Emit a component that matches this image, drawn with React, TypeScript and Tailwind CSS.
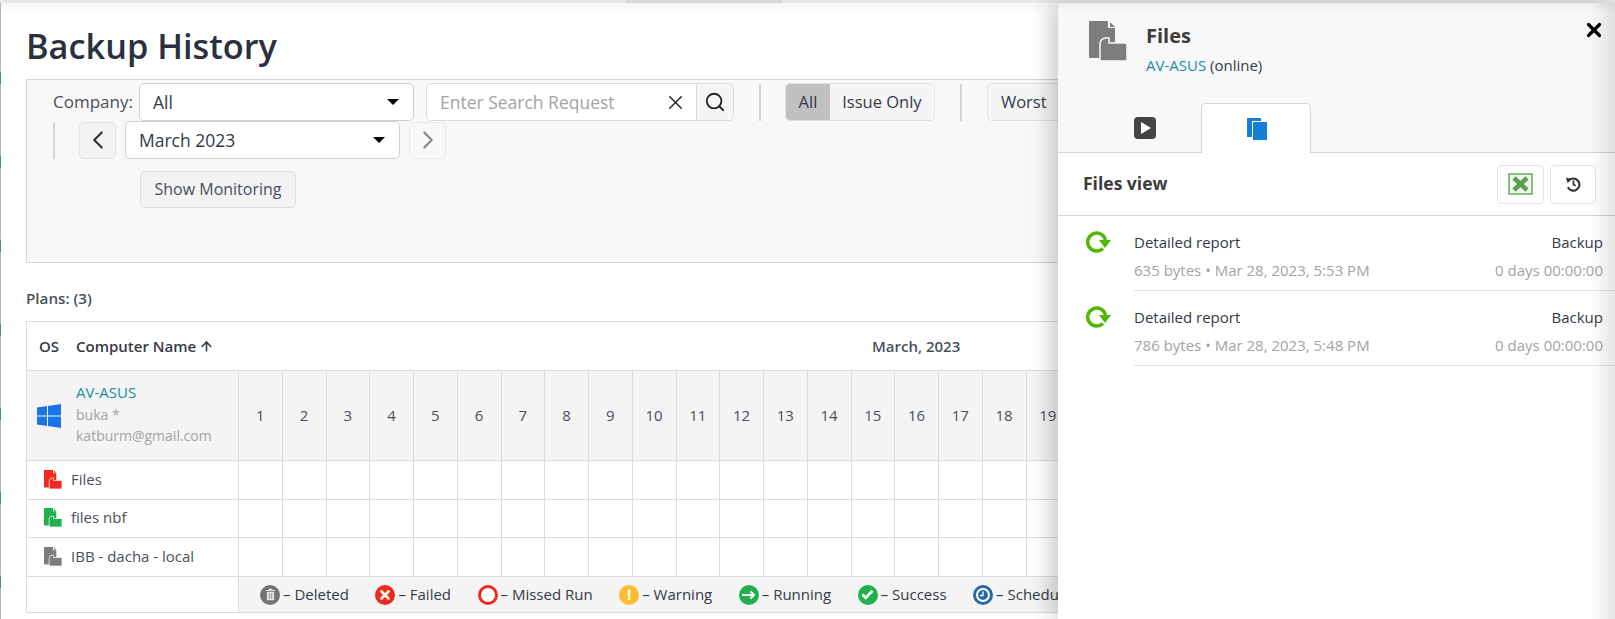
import { ArrowUp, ChevronLeft, ChevronRight, Search, X } from "lucide-react";
import React from "react";

const days = Array.from({ length: 31 }, (_, i) => i + 1);

const FilesIcon = ({ className, outline = "white" }: { className: string; outline?: string }) => (
  <svg viewBox="0 0 38 40" className={className} fill="currentColor">
    <path d="M1 0h18v7h7v30H1a1 1 0 0 1-1-1V1a1 1 0 0 1 1-1z" />
    <path d="M21 1l5 5h-5z" />
    <path
      d="M11 24c0-4 2-7 6-7h3v5h16a2 2 0 0 1 2 2v15a1 1 0 0 1-1 1H13a2 2 0 0 1-2-2z"
      stroke={outline}
      strokeWidth="1.5"
    />
  </svg>
);

const Caret = () => (
  <span className="w-0 h-0 border-x-[6px] border-x-transparent border-t-[6px] border-t-black" />
);

const Separator = ({ className = "" }: { className?: string }) => (
  <span className={`${className} w-[2px] h-[37px] bg-[#d4d4d4] shrink-0`} />
);

const Select = ({ label, className }: { label: string; className: string }) => (
  <div className={`${className} w-[275px] h-[38px] shrink-0 flex items-center justify-between pl-[13px] pr-[14px] bg-white border border-[#cfcfcf] rounded-[5px] text-[17.5px] text-[#343a46]`}>
    {label}
    <Caret />
  </div>
);

const Legend = ({ icon, label }: { icon: React.ReactNode; label: string }) => (
  <div className="flex items-center gap-[3px] shrink-0">
    {icon}
    <span>– {label}</span>
  </div>
);

const Dot = ({ color, children }: { color: string; children?: React.ReactNode }) => (
  <span className={`${color} w-5 h-5 rounded-full flex items-center justify-center text-white`}>{children}</span>
);

const legends = [
  {
    label: "Deleted",
    icon: (
      <Dot color="bg-[#737373]">
        <svg viewBox="0 0 12 14" className="w-[11px] h-[13px]" fill="#e4e4e4">
          <path d="M1 2h10v1.200H1zM4 .6h4V2H4zM2 4h8v9.400H2z" />
          <path d="M4.200 5.500h.8v6.500h-.8zM7 5.500h.8v6.500H7z" fill="#737373" />
        </svg>
      </Dot>
    ),
  },
  {
    label: "Failed",
    icon: (
      <Dot color="bg-[#ee2a1e]">
        <X className="w-[14px] h-[14px]" strokeWidth={4.5} />
      </Dot>
    ),
  },
  { label: "Missed Run", icon: <span className="w-5 h-5 rounded-full bg-white border-[3px] border-[#ee2a1e]" /> },
  {
    label: "Warning",
    icon: (
      <Dot color="bg-[#fdbc33]">
        <span className="font-bold text-[15px] leading-none">!</span>
      </Dot>
    ),
  },
  {
    label: "Running",
    icon: (
      <Dot color="bg-[#22b04f]">
        <svg viewBox="0 0 14 10" className="w-[14px] h-[10px]" fill="none" stroke="white" strokeWidth="2">
          <path d="M0 5h12M8.500 1.500L12 5 8.500 8.500" />
        </svg>
      </Dot>
    ),
  },
  {
    label: "Success",
    icon: (
      <Dot color="bg-[#22b04f]">
        <svg viewBox="0 0 14 12" className="w-[13px] h-[11px]" fill="none" stroke="white" strokeWidth="3">
          <path d="M1.500 6l3.500 3.500L12.500 2" />
        </svg>
      </Dot>
    ),
  },
  {
    label: "Scheduled",
    icon: (
      <Dot color="bg-[#2a69a6]">
        <svg viewBox="0 0 14 14" className="w-[14px] h-[14px]" fill="none" stroke="white" strokeWidth="2">
          <circle cx="7" cy="7" r="6" />
          <path d="M7 3.500V7.500H4" strokeWidth="1.300" />
        </svg>
      </Dot>
    ),
  },
];

const plans = [
  { name: "Files", color: "text-[#ee2a1e]", h: "h-[39px]" },
  { name: "files nbf", color: "text-[#22b04f]", h: "h-[38px]" },
  { name: "IBB - dacha - local", color: "text-[#7d7d7d]", h: "h-[39px]" },
];

const reports = [
  { size: "635 bytes • Mar 28, 2023, 5:53 PM" },
  { size: "786 bytes • Mar 28, 2023, 5:48 PM" },
];

const ReportIcon = () => (
  <svg viewBox="0 0 26 24" className="w-[26px] h-[24px]" fill="none">
    <path d="M19.500 10A9 9 0 1 0 17 18.500" stroke="#4fb800" strokeWidth="3.500" />
    <path d="M13 10h12l-6 8z" fill="#4fb800" />
  </svg>
);

const DayCells = ({ showDay }: { showDay?: boolean }) => (
  <>
    {days.map((d) => (
      <div key={d} className="w-[43.75px] shrink-0 border-l border-[#dcdcdc] flex items-center justify-center">
        {showDay ? d : ""}
      </div>
    ))}
  </>
);

const App = () => {
  return (
    <div className="relative w-[1615px] h-[619px] overflow-hidden bg-white text-[#343a46] font-['Open_Sans',sans-serif]">
      <div className="h-[3px] bg-[#e8e8e8] flex">
        <div className="w-[157px] h-full bg-[#d8d8d8] ml-[626px]" />
      </div>

      <div className="flex h-[616px]">
        {/* sliver of the page behind */}
        <div className="w-px shrink-0 bg-[repeating-linear-gradient(to_bottom,#b4b4b4_0px,#b4b4b4_61px,#b8bc9c_61px,#b8bc9c_69px,#3e9488_69px,#3e9488_81px,#b8bc9c_81px,#b8bc9c_84px)]" />

        <main className="flex-1 pl-[25px] pr-[21px]">
          <div className="h-[10px] -ml-[25px] -mr-[21px] bg-gradient-to-b from-[#f4f4f4] to-white" />
          <h1 className="text-[34.3px] leading-[46px] font-semibold text-[#2b3040] mt-[10px] mb-[10px]">Backup History</h1>

          <section className="h-[184px] bg-[#f8f8f8] border border-[#d4d4d4] pt-[3px] text-[16.5px]">
            <div className="flex items-center pl-[26px]">
              <span className="mr-[6px] text-[17px] text-[#4a4f5c]">Company:</span>
              <Select label="All" className="" />
              <div className="ml-[12px] w-[308px] h-[38px] flex bg-white border border-[#dcdcdc] rounded-[5px]">
                <div className="flex-1 flex items-center justify-between pl-[13px] pr-[9px]">
                  <span className="text-[17.5px] text-[#a3a3a3]">Enter Search Request</span>
                  <X className="w-[23px] h-[23px] text-[#222]" strokeWidth={1.5} />
                </div>
                <div className="w-[37px] flex items-center justify-center bg-[#f5f5f5] border-l border-[#dcdcdc] rounded-r-[5px]">
                  <Search className="w-[22px] h-[22px] text-[#222]" strokeWidth={2} />
                </div>
              </div>
              <Separator className="ml-[25px]" />
              <div className="ml-[24px] h-[38px] flex rounded-[5px] border border-[#e2e2e2] overflow-hidden">
                <span className="w-[44px] flex items-center justify-center bg-[#c1c1c1]">All</span>
                <span className="w-[104px] flex items-center justify-center bg-[#f5f5f5]">Issue Only</span>
              </div>
              <Separator className="ml-[25px]" />
              <div className="ml-[25px] w-[90px] h-[38px] flex items-center pl-[13px] bg-[#f5f5f5] border border-[#e2e2e2] rounded-[5px]">Worst</div>
            </div>

            <div className="flex items-center pl-[26px]">
              <Separator />
              <div className="ml-[24px] w-[37px] h-[37px] flex items-center justify-center bg-[#f3f3f3] border border-[#e2e2e2] rounded-[5px]">
                <ChevronLeft className="w-[30px] h-[30px] text-[#333]" strokeWidth={1.75} />
              </div>
              <Select label="March 2023" className="ml-[9px]" />
              <div className="ml-[9px] w-[37px] h-[37px] flex items-center justify-center bg-[#f8f8f8] border border-[#e8e8e8] rounded-[5px]">
                <ChevronRight className="w-[30px] h-[30px] text-[#888]" strokeWidth={1.75} />
              </div>
            </div>

            <div className="pl-[113px] mt-[12px]">
              <div className="w-[156px] h-[37px] flex items-center justify-center pb-px text-[16px] bg-[#f3f3f3] border border-[#dedede] rounded-[5px] text-[#4a4f5c]">
                Show Monitoring
              </div>
            </div>
          </section>

          <div className="mt-[26px] mb-[14px] text-[15.2px] leading-[18px] font-semibold text-[#4a4f5c]">Plans: (3)</div>

          <section className="border border-[#dcdcdc] text-[15px] text-[#4a4f5c]">
            <div className="h-[49px] flex items-center border-b border-[#dcdcdc] font-semibold">
              <span className="w-[49px] pl-[12px] text-[#343a46]">OS</span>
              <span className="w-[162px] flex items-center text-[#343a46]">
                Computer Name
                <ArrowUp className="w-[15px] h-[15px] ml-[3px]" strokeWidth={2.5} />
              </span>
              <span className="flex-1 text-center">March, 2023</span>
            </div>

            <div className="h-[90px] flex bg-[#f4f4f4] border-b border-[#dcdcdc]">
              <div className="w-[211px] shrink-0 flex items-center">
                <svg viewBox="0 0 24 24" className="w-[24px] h-[24px] ml-[10px]" fill="#1a73e8">
                  <path d="M0 3.400l10-1.400v9.500H0zM11 1.900L24 0v11.500H11zM0 12.500h10V22L0 20.600zM11 12.500h13V24l-13-1.900z" />
                </svg>
                <div className="ml-[15px] pb-[2px] leading-[21.500px]">
                  <div className="text-[#1a8ca3]">AV-ASUS</div>
                  <div className="text-[14px] text-[#a3a3a3]">buka *</div>
                  <div className="text-[14px] text-[#a3a3a3]">katburm@gmail.com</div>
                </div>
              </div>
              <DayCells showDay />
            </div>

            {plans.map((p) => (
              <div key={p.name} className={`${p.h} flex border-b border-[#dcdcdc]`}>
                <div className="w-[211px] shrink-0 flex items-center pl-[17px] pb-[2px]">
                  <FilesIcon className={`w-[18px] h-[19px] mr-[9px] ${p.color}`} />
                  {p.name}
                </div>
                <DayCells />
              </div>
            ))}

            <div className="h-[35px] flex">
              <div className="w-[211px] shrink-0" />
              <div className="flex-1 flex items-center gap-[26.500px] pl-[21px] bg-[#f4f4f4] border-l border-[#dcdcdc] text-[#343a46]">
                {legends.map((l) => (
                  <Legend key={l.label} icon={l.icon} label={l.label} />
                ))}
              </div>
            </div>
          </section>
        </main>
      </div>

      {/* right side drawer lies over the page */}
      <aside className="absolute right-0 top-[3px] bottom-0 w-[557px] bg-white shadow-[-8px_0_20px_rgba(0,0,0,0.2)] text-[#343a46]">
        <div className="relative h-[150px] bg-[#f8f8f8] border-b border-[#d4d4d4]">
          <div className="flex pl-[31px] pt-[18px]">
            <FilesIcon className="w-[38px] h-[40px] text-[#7d7d7d]" outline="#f8f8f8" />
            <div className="ml-[19px] pt-[1px]">
              <div className="text-[20px] leading-[28px] font-bold text-[#3c3c3c]">Files</div>
              <div className="text-[15px] leading-[20px] mt-[5px]"><span className="text-[#1a8ca3]">AV-ASUS</span> (online)</div>
            </div>
          </div>
          <X className="absolute right-[10px] top-[16px] w-[22px] h-[22px] text-black" strokeWidth={3.5} />
          <div className="absolute left-0 bottom-[-1px] flex items-end">
            <div className="w-[143px] h-[50px] flex items-center justify-end pr-[45px]">
              <span className="w-[22px] h-[22px] rounded-[4px] bg-[#444] flex items-center justify-center">
                <span className="w-0 h-0 border-y-[6px] border-y-transparent border-l-[10px] border-l-white ml-[2px]" />
              </span>
            </div>
            <div className="w-[110px] h-[50px] flex items-center justify-center pl-[2px] bg-white border border-b-0 border-[#d4d4d4] rounded-t-[5px]">
              <svg viewBox="0 0 20 22" className="w-[20px] h-[22px]" fill="#147fd6">
                <path d="M0 0h14v3H5v16H0z" />
                <path d="M6 4h14v18H6z" />
              </svg>
            </div>
          </div>
        </div>

        <div className="h-[63px] flex items-center justify-between pl-[25px] pr-[19px] border-b border-[#d4d4d4]">
          <span className="text-[17.5px] font-bold text-[#3c3c3c] pb-[2px]">Files view</span>
          <div className="flex gap-[6px]">
            <div className="w-[47px] h-[39px] flex items-center justify-center border border-[#e2e2e2] rounded-[5px]">
              <svg viewBox="0 0 25 22" className="w-[25px] h-[22px]">
                <rect x="1" y="1" width="23" height="20" fill="#f0f6ec" stroke="#6aa85f" strokeWidth="1.500" />
                <path d="M6 5l13 12M19 5L6 17" stroke="#5a9e4f" strokeWidth="4.500" />
              </svg>
            </div>
            <div className="w-[46px] h-[39px] flex items-center justify-center border border-[#e2e2e2] rounded-[5px]">
              <svg viewBox="0 0 18 18" className="w-[16px] h-[16px]" fill="none" stroke="#333" strokeWidth="2.400">
                <path d="M4 5.500A6.800 6.800 0 1 1 3.200 12.500" />
                <path d="M9.500 5v4.500l2.500 1.500" strokeWidth="2" />
                <path d="M1 2l6.500 1-4.500 5z" fill="#333" stroke="none" />
              </svg>
            </div>
          </div>
        </div>

        <div className="text-[15px]">
          {reports.map((r) => (
            <div key={r.size} className="flex pl-[28px] h-[75px]">
              <div className="w-[48px] pt-[14px] shrink-0"><ReportIcon /></div>
              <div className="flex-1 border-b border-[#e2e2e2] pr-[12px] pt-[16px]">
                <div className="flex justify-between leading-[20px]">
                  <span>Detailed report</span>
                  <span>Backup</span>
                </div>
                <div className="flex justify-between leading-[20px] mt-[8px] text-[#a3a3a3]">
                  <span>{r.size}</span>
                  <span>0 days 00:00:00</span>
                </div>
              </div>
            </div>
          ))}
        </div>

        {/* soft shading along the drawer's right and top edges */}
        <div className="absolute right-0 top-0 bottom-0 w-[25px] bg-gradient-to-r from-transparent to-black/10 pointer-events-none" />
        <div className="absolute left-0 right-0 top-0 h-[8px] bg-gradient-to-b from-black/5 to-transparent pointer-events-none" />
      </aside>
    </div>
  );
};

export default App;
